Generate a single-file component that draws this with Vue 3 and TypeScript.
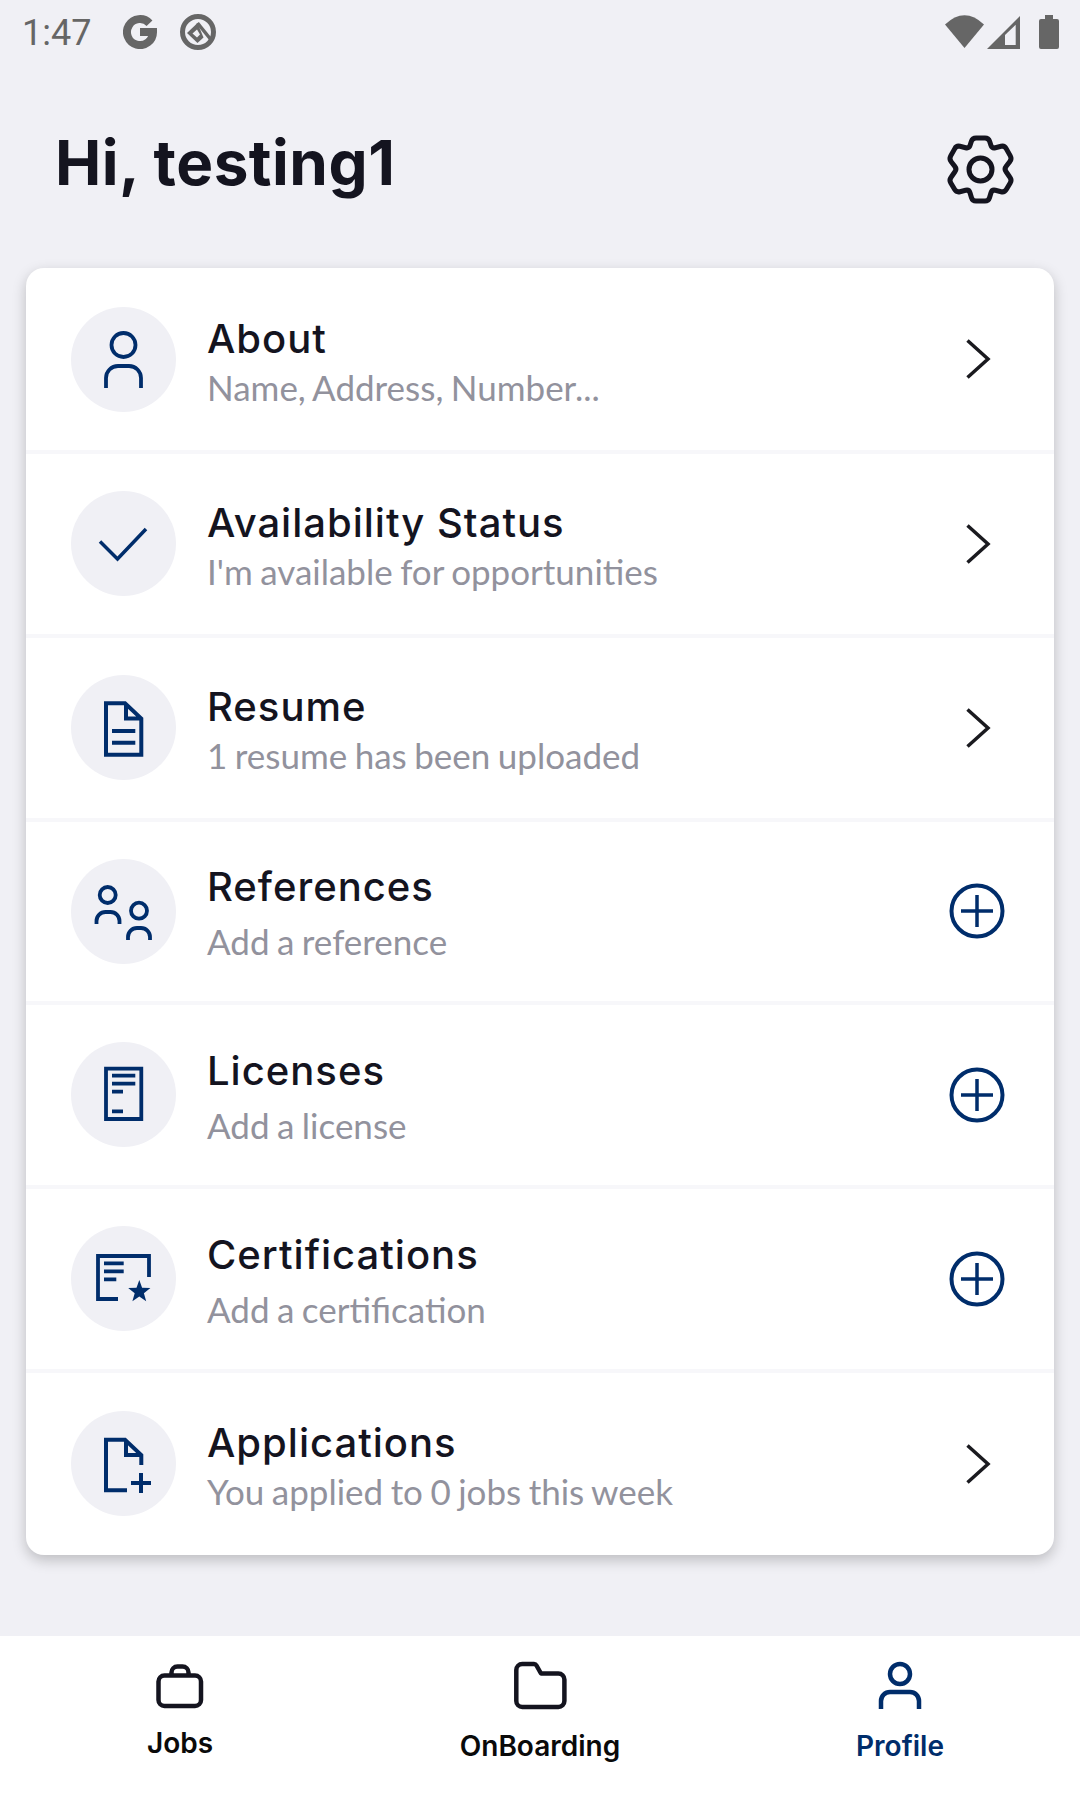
<template>
  <div class="screen">
    <div class="status-bar">
      <span class="time">1:47</span>
      <svg class="status-g" width="34" height="34" viewBox="0 0 34 34">
        <path d="M26.5 8.2A13 13 0 1 0 30 17H17" fill="none" stroke="#666" stroke-width="8" />
      </svg>
      <svg class="status-q" width="38" height="38" viewBox="0 0 38 38">
        <circle cx="19" cy="19" r="15.5" fill="none" stroke="#666" stroke-width="5" />
        <path d="M18.5 10 8 20l10.5 10 6-5.500Z" fill="#666" />
        <path d="M18 16.5 13.5 20.5 18 24.5 21 21.5Z" fill="#f0f0f5" />
        <path d="M18.5 10 33 28" fill="none" stroke="#666" stroke-width="3.5" />
      </svg>
      <span class="status-spacer"></span>
      <svg width="40" height="34" viewBox="0 0 40 34">
        <path d="M0 9.5Q19.5-9 39 9.5L19.5 33Z" fill="#666" />
      </svg>
      <svg class="status-signal" width="33" height="33" viewBox="0 0 33 33">
        <path d="M0 33 33 0V33Z" fill="#666" />
        <path d="M18 19 28.7 8.7V29H18Z" fill="#f0f0f5" />
      </svg>
      <svg class="status-battery" width="20" height="34" viewBox="0 0 20 34">
        <path d="M6 0h8v4h4a2 2 0 0 1 2 2v26a2 2 0 0 1-2 2H2a2 2 0 0 1-2-2V6a2 2 0 0 1 2-2h4Z" fill="#666" />
      </svg>
    </div>

    <header class="header">
      <h1 class="greeting">Hi, testing1</h1>
      <svg width="100" height="100" viewBox="0 -1 100 100">
        <path :d="gearPath" fill="none" stroke="#14141f" stroke-width="5" stroke-linejoin="round" />
        <circle cx="50.5" cy="48.5" r="11.5" fill="none" stroke="#14141f" stroke-width="5" />
      </svg>
    </header>

    <section class="card">
      <div v-for="item in items" :key="item.title" class="row">
        <div class="row-icon">
          <svg width="105" height="105" viewBox="0 0 105 105">
            <path :d="item.icon" fill="none" stroke="#002d6b" :stroke-width="item.stroke" />
            <path v-if="item.fill" :d="item.fill" fill="#002d6b" />
          </svg>
        </div>
        <div class="row-text" :class="{ spaced: item.action === 'add' }">
          <div class="row-title">{{ item.title }}</div>
          <div class="row-sub">{{ item.sub }}</div>
        </div>
        <div class="row-action">
          <svg v-if="item.action === 'open'" width="60" height="60" viewBox="0 0 60 60">
            <path d="M20.5 11.5 41 30 20.5 48.5" fill="none" stroke="#1a1a1f" stroke-width="3.5" />
          </svg>
          <svg v-else width="60" height="60" viewBox="0 0 60 60">
            <circle cx="30" cy="30" r="25.5" fill="none" stroke="#002d6b" stroke-width="4" />
            <path d="M14 30H46M30 14V46" fill="none" stroke="#002d6b" stroke-width="3.5" />
          </svg>
        </div>
      </div>
    </section>

    <span class="spacer"></span>

    <nav class="tabs">
      <div v-for="tab in tabs" :key="tab.label" class="tab" :class="{ active: tab.active }">
        <svg width="60" height="60" viewBox="0 0 60 60">
          <path
            :d="tab.icon"
            fill="none"
            :stroke="tab.active ? '#002d6b' : '#14141f'"
            stroke-width="4.5"
            stroke-linejoin="round"
          />
        </svg>
        <span class="tab-label">{{ tab.label }}</span>
      </div>
    </nav>
  </div>
</template>

<script setup lang="ts">
type RowItem = {
  title: string;
  sub: string;
  icon: string;
  stroke: number;
  fill?: string;
  action: "open" | "add";
};

// closed polygon with its corners rounded off
function roundedPath(points: number[][], r: number): string {
  let d = "";
  points.forEach((p, i) => {
    const prev = points[(i + points.length - 1) % points.length];
    const next = points[(i + 1) % points.length];
    const toward = (q: number[]) => {
      const len = Math.hypot(q[0] - p[0], q[1] - p[1]);
      const t = Math.min(r, len / 2) / len;
      return [p[0] + (q[0] - p[0]) * t, p[1] + (q[1] - p[1]) * t];
    };
    const a = toward(prev);
    const b = toward(next);
    d += `${i === 0 ? "M" : "L"}${a[0].toFixed(1)} ${a[1].toFixed(1)}Q${p[0]} ${p[1]} ${b[0].toFixed(1)} ${b[1].toFixed(1)}`;
  });
  return d + "Z";
}

const gearPath = roundedPath(
  [
    [42.5, 17],
    [58.5, 17],
    [62, 27.5],
    [74.5, 24.5],
    [82, 38],
    [74, 48],
    [82, 59],
    [74.5, 71.5],
    [62, 68.5],
    [58.5, 80],
    [42.5, 80],
    [39, 68.5],
    [26.5, 71.5],
    [19, 59],
    [27, 48],
    [19, 38],
    [26.5, 24.5],
    [39, 27.5],
  ],
  3.5,
);

const items: RowItem[] = [
  {
    title: "About",
    sub: "Name, Address, Number...",
    icon: "M40.5 38a12 12 0 1 0 24 0a12 12 0 1 0-24 0M35 81V71a12 12 0 0 1 12-12h11a12 12 0 0 1 12 12V81",
    stroke: 3.8,
    action: "open",
  },
  {
    title: "Availability Status",
    sub: "I'm available for opportunities",
    icon: "M29 50.5 46.5 68 75 38",
    stroke: 3.5,
    action: "open",
  },
  {
    title: "Resume",
    sub: "1 resume has been uploaded",
    icon: "M35 28.3H54L70.3 43.5V79.7H35ZM55 28.3V43.5H70.3M41 56H64.3M41 67.7H64.3",
    stroke: 4,
    action: "open",
  },
  {
    title: "References",
    sub: "Add a reference",
    icon: "M28.7 36a8 8 0 1 0 16 0a8 8 0 1 0-16 0M25.5 65V62a9 9 0 0 1 9-9h5a9 9 0 0 1 9 9v3M60 51.7a8 8 0 1 0 16 0a8 8 0 1 0-16 0M57 81V78a9 9 0 0 1 9-9h4a9 9 0 0 1 9 9v3",
    stroke: 3.8,
    action: "add",
  },
  {
    title: "Licenses",
    sub: "Add a license",
    icon: "M35 26.7H70.3V77H35ZM41 33.7H64.3M41 41.7H64.3M41 49.7H52M41 69.3H52",
    stroke: 3.8,
    action: "add",
  },
  {
    title: "Certifications",
    sub: "Add a certification",
    icon: "M47 73H27V30H78V51M33 37.3H52.7M33 45.3H52.7M33 53.3H45.3",
    stroke: 3.8,
    fill: "M68.3 54 71.1 61.8 79.4 62.1 72.9 67.2 75.2 75.2 68.3 70.5 61.4 75.2 63.7 67.2 57.2 62.1 65.5 61.8Z",
    action: "add",
  },
  {
    title: "Applications",
    sub: "You applied to 0 jobs this week",
    icon: "M56 79.3H35V28.7H54L70.3 44V54M55 28.7V44H70.3M60 72H80M70 62V82",
    stroke: 4,
    action: "open",
  },
];

const tabs = [
  {
    label: "Jobs",
    icon: "M14.5 20.5H45A6 6 0 0 1 51 26.5V45A6 6 0 0 1 45 51H14.5A6 6 0 0 1 8.5 45V26.5A6 6 0 0 1 14.5 20.5ZM21.5 20V17.5A6 6 0 0 1 27.5 11.5H32.5A6 6 0 0 1 38.5 17.5V20",
    active: false,
  },
  {
    label: "OnBoarding",
    icon: "M12.3 9H24A3 3 0 0 1 26.5 10.5L31 18.5H48.4A6 6 0 0 1 54.4 24.5V46A6 6 0 0 1 48.4 52H12.3A6 6 0 0 1 6.3 46V15A6 6 0 0 1 12.3 9Z",
    active: false,
  },
  {
    label: "Profile",
    icon: "M20 19a10 10 0 1 0 20 0a10 10 0 1 0-20 0M11 54V46a9 9 0 0 1 9-9H40a9 9 0 0 1 9 9V54",
    active: true,
  },
];
</script>

<style scoped>
.screen {
  width: 1080px;
  height: 1794px;
  background: #f0f0f5;
  display: flex;
  flex-direction: column;
  font-family: "Inter", "Liberation Sans", sans-serif;
}

.status-bar {
  height: 64px;
  padding: 0 21px 0 22px;
  display: flex;
  align-items: center;
  flex-shrink: 0;
}

.time {
  font-family: "Roboto", sans-serif;
  font-size: 36px;
  color: #666;
  width: 69px;
  line-height: 1;
  padding-top: 2px;
}

.status-g {
  margin-left: 32px;
}

.status-q {
  margin-left: 22px;
}

.status-spacer {
  flex: 1;
}

.status-signal {
  margin-left: 2px;
}

.status-battery {
  margin-left: 19px;
}

.header {
  height: 100px;
  padding: 56px 50px 48px 55px;
  display: flex;
  align-items: center;
  justify-content: space-between;
  flex-shrink: 0;
}

.greeting {
  margin: 0 0 15px;
  font-size: 62px;
  line-height: 100px;
  font-weight: 700;
  color: #14141f;
  letter-spacing: 0.5px;
}

.card {
  margin: 0 26px;
  background: #fff;
  border-radius: 18px;
  box-shadow: 0 5px 14px rgba(0, 0, 0, 0.22);
  overflow: hidden;
  flex-shrink: 0;
}

.row {
  height: 179.8px;
  padding: 0 47px 0 45px;
  display: flex;
  align-items: center;
  border-bottom: 4px solid #f7f7fa;
}

.row:first-child {
  height: 182px;
}

.row:nth-child(4) {
  height: 179.2px;
}

.row:nth-child(6) {
  height: 180.4px;
}

.row:last-child {
  height: 182px;
  border-bottom: none;
}

.row-icon {
  width: 105px;
  height: 105px;
  border-radius: 50%;
  background: #f0f0f5;
  flex-shrink: 0;
}

.row-icon svg {
  display: block;
}

.row-text {
  flex: 1;
  margin-left: 31px;
  padding-top: 7px;
  min-width: 0;
}

.row-title {
  font-size: 40px;
  line-height: 48px;
  font-weight: 500;
  letter-spacing: 1px;
  color: #14141f;
}

.row-sub {
  font-family: "Lato", sans-serif;
  font-size: 35px;
  line-height: 48px;
  word-spacing: -1.5px;
  color: #92929d;
}

.row-text.spaced {
  padding-top: 6px;
}

.row-text.spaced .row-sub {
  margin-top: 6px;
}

.row-action svg {
  display: block;
}

.spacer {
  flex: 1;
}

.tabs {
  height: 158px;
  background: #fff;
  display: grid;
  grid-template-columns: repeat(3, 1fr);
  flex-shrink: 0;
}

.tab {
  padding-top: 19px;
  display: flex;
  flex-direction: column;
  align-items: center;
  color: #0a0a0a;
}

.tab.active {
  color: #002d6b;
}

.tab-label {
  margin-top: 11px;
  font-size: 28px;
  line-height: 40px;
  font-weight: 600;
}

.tab:first-child .tab-label {
  margin-top: 8px;
}
</style>
